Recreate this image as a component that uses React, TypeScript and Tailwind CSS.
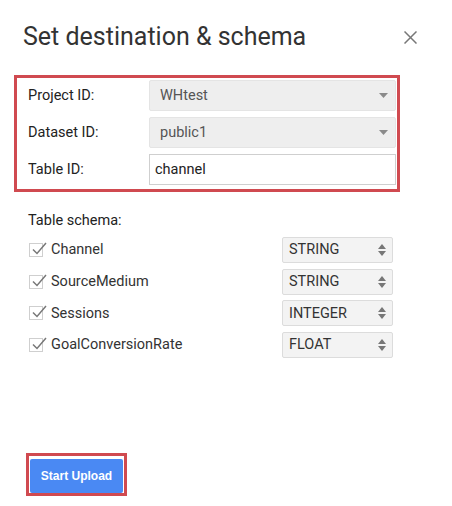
import React from "react";

const Caret = () => (
  <svg width="9" height="5" viewBox="0 0 9 5" className="block">
    <path d="M0 0 L9 0 L4.5 5 Z" fill="#8a8a8a" />
  </svg>
);

const UpDown = () => (
  <svg width="8" height="12" viewBox="0 0 8 12" className="block">
    <path d="M0 5 L8 5 L4 0 Z" fill="#777" />
    <path d="M0 7 L8 7 L4 12 Z" fill="#777" />
  </svg>
);

const Check = () => (
  <div className="relative w-[14px] h-[14px] border border-[#cfcfcf] bg-white">
    <svg width="16" height="16" viewBox="0 0 16 16" className="absolute left-[2px] top-[-4px]">
      <path d="M1 9.5 L5 13.5 L14 3" fill="none" stroke="#777" strokeWidth="1.5" />
    </svg>
  </div>
);

const fields = [
  { name: "Channel", type: "STRING" },
  { name: "SourceMedium", type: "STRING" },
  { name: "Sessions", type: "INTEGER" },
  { name: "GoalConversionRate", type: "FLOAT" },
];

export default function App() {
  return (
    <div className="w-[452px] h-[506px] bg-white font-['Roboto',sans-serif] overflow-hidden">
      <div className="flex items-center justify-between pl-[23px] pr-[35px] pt-[21px]">
        <h2 className="text-[25px] leading-[32px] text-[#333] font-normal">Set destination &amp; schema</h2>
        <svg width="13" height="13" viewBox="0 0 13 13" className="block mt-[0px]">
          <path d="M0.5 0.5 L12.5 12.5 M12.5 0.5 L0.5 12.5" stroke="#777" strokeWidth="1.5" />
        </svg>
      </div>

      <div className="mt-[22px] ml-[14px] w-[386px] border-[3px] border-[#d04a50] pt-[2px] pb-[4px] flex flex-col gap-[6px]">
        <div className="flex items-center h-[31px]">
          <div className="w-[132px] pl-[11px] text-[14.5px] text-[#222]">Project ID:</div>
          <div className="flex-1 mr-[1px] h-full bg-[#eeeeee] border border-[#e4e4e4] rounded-[2px] flex items-center justify-between pl-[10px] pr-[7px]">
            <span className="text-[14.5px] text-[#555]">WHtest</span>
            <Caret />
          </div>
        </div>
        <div className="flex items-center h-[31px]">
          <div className="w-[132px] pl-[11px] text-[14.5px] text-[#222]">Dataset ID:</div>
          <div className="flex-1 mr-[1px] h-full bg-[#eeeeee] border border-[#e4e4e4] rounded-[2px] flex items-center justify-between pl-[10px] pr-[7px]">
            <span className="text-[14.5px] text-[#555]">public1</span>
            <Caret />
          </div>
        </div>
        <div className="flex items-center h-[31px]">
          <div className="w-[132px] pl-[11px] text-[14.5px] text-[#222]">Table ID:</div>
          <div className="flex-1 mr-[1px] h-full bg-white border border-[#cfcfcf] flex items-center pl-[5px]">
            <span className="text-[14.5px] text-[#222]">channel</span>
          </div>
        </div>
      </div>

      <div className="mt-[21px] pl-[28px] text-[14.5px] leading-[16px] text-[#222]">Table schema:</div>

      <div className="mt-[8px] pl-[29px] w-[393px] flex flex-col gap-[5.7px]">
        {fields.map((f) => (
          <div key={f.name} className="flex items-center h-[26px]">
            <Check />
            <span className="ml-[8px] text-[14.5px] text-[#333]">{f.name}</span>
            <div className="ml-auto w-[111px] h-full bg-[#f3f3f3] border border-[#dcdcdc] rounded-[2px] flex items-center justify-between pl-[6px] pr-[6px]">
              <span className="text-[14.5px] text-[#333]">{f.type}</span>
              <UpDown />
            </div>
          </div>
        ))}
      </div>

      <div className="mt-[95px] ml-[26px] w-[101px] h-[43px] border-[3px] border-[#d04a50] pt-[3px] pl-[1px]">
        <button className="w-[93px] h-[34px] bg-[#4a89f3] rounded-[2px] text-white text-[12px] font-bold font-['Liberation_Sans',sans-serif]">
          Start Upload
        </button>
      </div>
    </div>
  );
}
